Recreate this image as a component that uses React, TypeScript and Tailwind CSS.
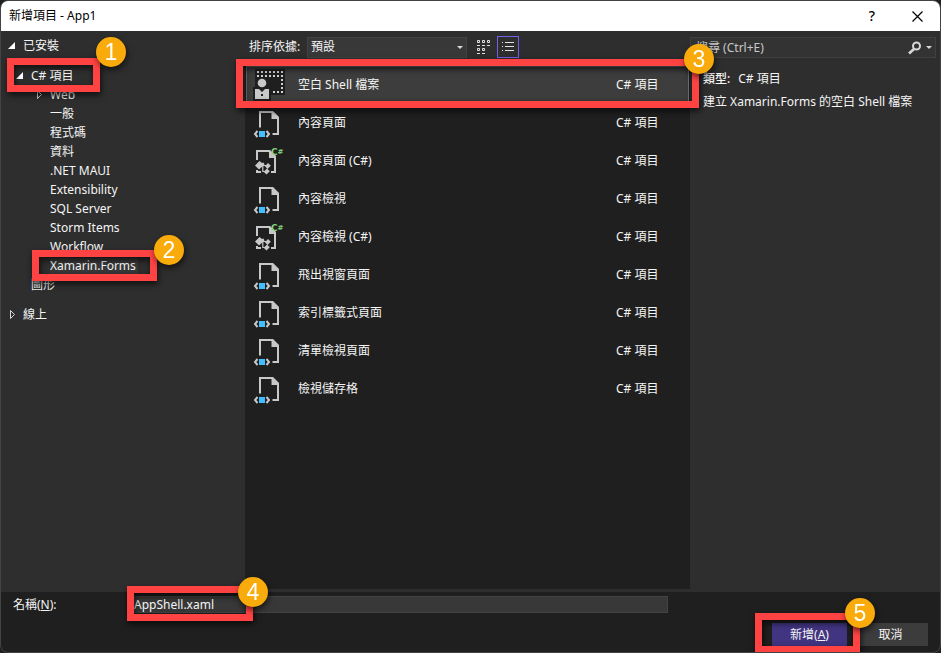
import { useState } from "react";
import type { ReactNode } from "react";

type IconKind = "shell" | "page" | "csharp";

const templates: { name: string; icon: IconKind }[] = [
  { name: "空白 Shell 檔案", icon: "shell" },
  { name: "內容頁面", icon: "page" },
  { name: "內容頁面 (C#)", icon: "csharp" },
  { name: "內容檢視", icon: "page" },
  { name: "內容檢視 (C#)", icon: "csharp" },
  { name: "飛出視窗頁面", icon: "page" },
  { name: "索引標籤式頁面", icon: "page" },
  { name: "清單檢視頁面", icon: "page" },
  { name: "檢視儲存格", icon: "page" },
];

const categories = [
  "Web",
  "一般",
  "程式碼",
  "資料",
  ".NET MAUI",
  "Extensibility",
  "SQL Server",
  "Storm Items",
  "Workflow",
  "Xamarin.Forms",
];

/* A numbered step: a red frame round its parent, and a badge. */
function Step({ n, frame, badge }: { n: number; frame: string; badge: string }) {
  return (
    <span aria-hidden="true" className={`pointer-events-none absolute z-10 ${frame}`}>
      <span className="absolute inset-0 border-7 border-[#ff4343] drop-shadow-[1px_3px_3px_rgba(0,0,0,0.7)]" />
      <span
        className={`absolute flex size-[30px] items-center justify-center rounded-full bg-[#faab0c] font-['Liberation_Sans',sans-serif] text-[23px] leading-none text-white drop-shadow-[1px_3px_3px_rgba(0,0,0,0.6)] ${badge}`}
      >
        {n}
      </span>
    </span>
  );
}

const shellDots: [number, number][] = [
  ...[4, 8, 12, 16, 20, 24, 28].flatMap((x): [number, number][] => [
    [x, 2],
    [x, 6],
  ]),
  [28, 10],
  [28, 14],
  [28, 18],
  [28, 22],
  [24, 22],
  [20, 22],
];

function TemplateIcon({ kind }: { kind: IconKind }) {
  if (kind === "shell") {
    return (
      <svg width="32" height="32" viewBox="0 0 32 32" aria-hidden="true">
        <path d="M2 0h30v26H18v6H0V18h2z" fill="#1f1f1f" />
        {shellDots.map(([x, y]) => (
          <rect key={`${x}-${y}`} x={x} y={y} width="2" height="2" fill="#d0d0d0" />
        ))}
        <circle cx="9" cy="14" r="4.300" fill="#c8c8c8" />
        <path d="M2 20h4l3 3 3-3h4v10H2z" fill="#c8c8c8" />
        <rect x="8" y="25" width="2" height="2" fill="#1f1f1f" />
      </svg>
    );
  }
  if (kind === "csharp") {
    return (
      <svg width="32" height="32" viewBox="0 0 32 32" aria-hidden="true" className="overflow-visible">
        <path d="M4 15V6h12l6 6v15h-4M4 25v2h4" fill="none" stroke="#c8c8c8" strokeWidth="2" />
        <path d="M16 5h1l6 6v2h-7z" fill="#c8c8c8" />
        <path d="M2 20.500l4.500-4.500 2.500 2 1.500-.5 1 2-5.500 5z" fill="#c8c8c8" />
        <path d="M9 20.500h5M9.800 20.500v6h3" fill="none" stroke="#c8c8c8" strokeWidth="1.200" />
        <path d="M15 18l2.800 2.800-3.300 3.200-2.500-2.700zM14 23.500l2.800 2.800-3.300 3.200-2.800-2.800z" fill="#c8c8c8" />
        <text x="18" y="10" fontFamily="DejaVu Sans, sans-serif" fontWeight="700" fontSize="9" fill="#82d47c">
          C
          <tspan fontSize="7" dy="-1">
            #
          </tspan>
        </text>
      </svg>
    );
  }
  return (
    <svg width="32" height="32" viewBox="0 0 32 32" aria-hidden="true">
      <path d="M7 20.500V5h12l6 6v16h-5.500" fill="none" stroke="#c8c8c8" strokeWidth="2" />
      <path d="M18.500 4h1.500l6 6v2h-7.500z" fill="#c8c8c8" />
      <rect x="6" y="24" width="6" height="6" fill="#3fbfff" />
      <path d="M4.500 24L2 27l2.500 3M13.500 24L16 27l-2.500 3" fill="none" stroke="#c8c8c8" strokeWidth="2" />
    </svg>
  );
}

function Open() {
  return (
    <svg width="7" height="7" viewBox="0 0 7 7" aria-hidden="true">
      <path d="M7 0v7H0z" fill="#fff" />
    </svg>
  );
}

function Closed() {
  return (
    <svg width="7" height="9" viewBox="0 0 7 9" aria-hidden="true">
      <path d="M2.500 0.500v8l4-4z" fill="none" stroke="#d8d8d8" />
    </svg>
  );
}

function Caret({ className }: { className: string }) {
  return (
    <svg width="6" height="3" viewBox="0 0 6 3" aria-hidden="true" className={className}>
      <path d="M0 0h6L3 3z" fill="#d8d8d8" />
    </svg>
  );
}

function Node({ mark, children, className }: { mark?: ReactNode; children: ReactNode; className: string }) {
  return (
    <button type="button" className={`relative flex h-[19px] items-center text-left ${className}`}>
      <span className="flex w-[15px] shrink-0 items-center">{mark}</span>
      {children}
    </button>
  );
}

export default function App() {
  const [selected, setSelected] = useState(0);
  const [name, setName] = useState("AppShell.xaml");

  return (
    <div className="flex min-h-screen flex-col bg-[#202020] font-['Noto_Sans','Noto_Sans_CJK_TC',sans-serif] text-xs text-[#f5f5f5]">
      <div className="flex flex-1 flex-col overflow-hidden rounded-lg border border-[#444444] bg-[#1f1f1f]">
        <header className="flex h-[30px] items-center bg-white pl-2 text-black">
          <h1 className="flex-1">新增項目 - App1</h1>
          <button type="button" aria-label="說明" className="h-full w-11 text-sm font-medium">
            ?
          </button>
          <button type="button" aria-label="關閉" className="flex h-full w-[46px] items-center justify-center">
            <svg width="11" height="11" viewBox="0 0 11 11" aria-hidden="true">
              <path d="M.5.5l10 10M10.500.5l-10 10" stroke="#000" strokeWidth="1.200" />
            </svg>
          </button>
        </header>

        <main className="flex flex-1 bg-[#2e2e2e]">
          <nav aria-label="類別" className="flex w-[244px] shrink-0 flex-col items-start pt-[5px]">
            <Node mark={<Open />} className="ml-[7px]">
              已安裝
            </Node>
            <div className="mt-[11px] flex flex-col items-start">
              <Node mark={<Open />} className="ml-[15px]">
                C# 項目
                <Step n={1} frame="-top-2 -left-[9px] h-[34px] w-[93px]" badge="-top-[21px] -right-[26px]" />
              </Node>
              {categories.map((c) => (
                <Node key={c} mark={c === "Web" ? <Closed /> : undefined} className="ml-[34px]">
                  {c === "Xamarin.Forms" ? (
                    <>
                      <span className="bg-[#383838] pr-0.5">{c}</span>
                      <Step n={2} frame="-top-[6px] -left-[3px] h-[31px] w-[125px]" badge="-top-[15px] -right-[27px]" />
                    </>
                  ) : (
                    c
                  )}
                </Node>
              ))}
              <Node className="ml-[15px]">圖形</Node>
            </div>
            <Node mark={<Closed />} className="mt-[11px] ml-[7px]">
              線上
            </Node>
          </nav>

          <section className="flex min-w-0 flex-1 flex-col pb-[3px]">
            <div className="flex h-[29px] items-center pt-[3px] pl-1">
              <label htmlFor="sort" className="w-[58px]">
                排序依據:
              </label>
              <div className="relative">
                <select
                  id="sort"
                  className="block h-[21px] w-40 appearance-none border border-[#434343] bg-[#383838] pl-[3px] text-xs"
                >
                  <option>預設</option>
                </select>
                <Caret className="pointer-events-none absolute top-[9px] right-1" />
              </div>
              <button type="button" aria-label="圖示" className="ml-[6px] flex h-[22px] w-[22px] items-center justify-center">
                <svg width="14" height="14" viewBox="0 0 14 14" aria-hidden="true" fill="none" stroke="#e0e0e0">
                  <path d="M.5.5h2v2h-2zM5.500.5h2v2h-2zM10.500.5h2v2h-2zM.5 8.500h2v2h-2zM5.500 8.500h2v2h-2z" />
                  <path d="M0 5.500h3M5 5.500h3M10 5.500h3M0 13.500h3M5 13.500h3" />
                </svg>
              </button>
              <button
                type="button"
                aria-label="清單"
                className="ml-0.5 flex h-[22px] w-[22px] items-center justify-center border border-[#7160e8]"
              >
                <svg width="12" height="10" viewBox="0 0 12 10" aria-hidden="true" stroke="#e0e0e0">
                  <path d="M0 .5h1M3 .5h9M0 4.500h1M3 4.500h9M0 8.500h1M3 8.500h9" />
                </svg>
              </button>
            </div>
            <ul className="flex-1 bg-[#1f1f1f] px-px pt-[6px]">
              {templates.map((t, i) => (
                <li key={t.name} className="relative">
                  <button
                    type="button"
                    aria-pressed={i === selected}
                    onClick={() => setSelected(i)}
                    className={`flex h-[38px] w-full items-center border pl-[6px] text-left ${
                      i === selected ? "border-[#707070] bg-[#3d3d3d]" : "border-transparent"
                    }`}
                  >
                    <TemplateIcon kind={t.icon} />
                    <span className="ml-[13px] flex-1">{t.name}</span>
                    <span className="w-[72px]">C# 項目</span>
                  </button>
                  {i === 0 && <Step n={3} frame="-top-[7px] -right-[10px] -bottom-1 -left-[10px]" badge="-top-[15px] -right-[15px]" />}
                </li>
              ))}
            </ul>
          </section>

          <aside className="w-[250px] shrink-0 pt-[6px] pr-1">
            <div className="flex h-[21px] items-center border border-[#3f3f3f] bg-[#333333]">
              <input
                type="search"
                aria-label="搜尋"
                placeholder="搜尋 (Ctrl+E)"
                className="min-w-0 flex-1 bg-transparent pl-[5px] placeholder:text-[#c8c8c8]"
              />
              <button type="button" aria-label="開始搜尋" className="flex items-center">
                <svg width="14" height="14" viewBox="0 0 14 14" aria-hidden="true" fill="none" stroke="#d8d8d8">
                  <circle cx="8.500" cy="5" r="3.500" strokeWidth="2" />
                  <path d="M6 8l-5 4.500" strokeWidth="2.600" />
                </svg>
                <Caret className="mr-[3px] ml-[4px]" />
              </button>
            </div>
            <div className="pt-[11px] pl-[13px]">
              <p className="h-[23px] leading-[19px]">
                <span className="font-medium">類型:</span>
                <span className="ml-2">C# 項目</span>
              </p>
              <p className="leading-[19px] whitespace-nowrap">建立 Xamarin.Forms 的空白 Shell 檔案</p>
            </div>
          </aside>
        </main>

        <footer className="pt-1 pl-3">
          <div className="flex h-[18px] items-start">
            <label htmlFor="name" className="w-[117px] leading-[18px]">
              名稱(<u>N</u>):
            </label>
            <div className="relative">
              <input
                id="name"
                value={name}
                onChange={(e) => setName(e.target.value)}
                className="block h-[17px] w-[538px] border border-[#434343] bg-[#383838] pl-[3px]"
              />
              <Step n={4} frame="-top-[10px] -left-[3px] h-[35px] w-[126px]" badge="-top-[9px] -right-[15px]" />
            </div>
          </div>
          <div className="flex justify-end gap-[6px] pt-[9px] pr-3 pb-[6px]">
            <div className="relative">
              <button type="button" className="block h-[23px] w-[75px] bg-[#413480]">
                新增(<u>A</u>)
              </button>
              <Step n={5} frame="-top-[10px] -left-[17px] h-10 w-[105px]" badge="-top-[15px] -right-[15px]" />
            </div>
            <button type="button" className="h-[23px] w-[75px] bg-[#3c3c3c]">
              取消
            </button>
          </div>
        </footer>
      </div>
    </div>
  );
}
